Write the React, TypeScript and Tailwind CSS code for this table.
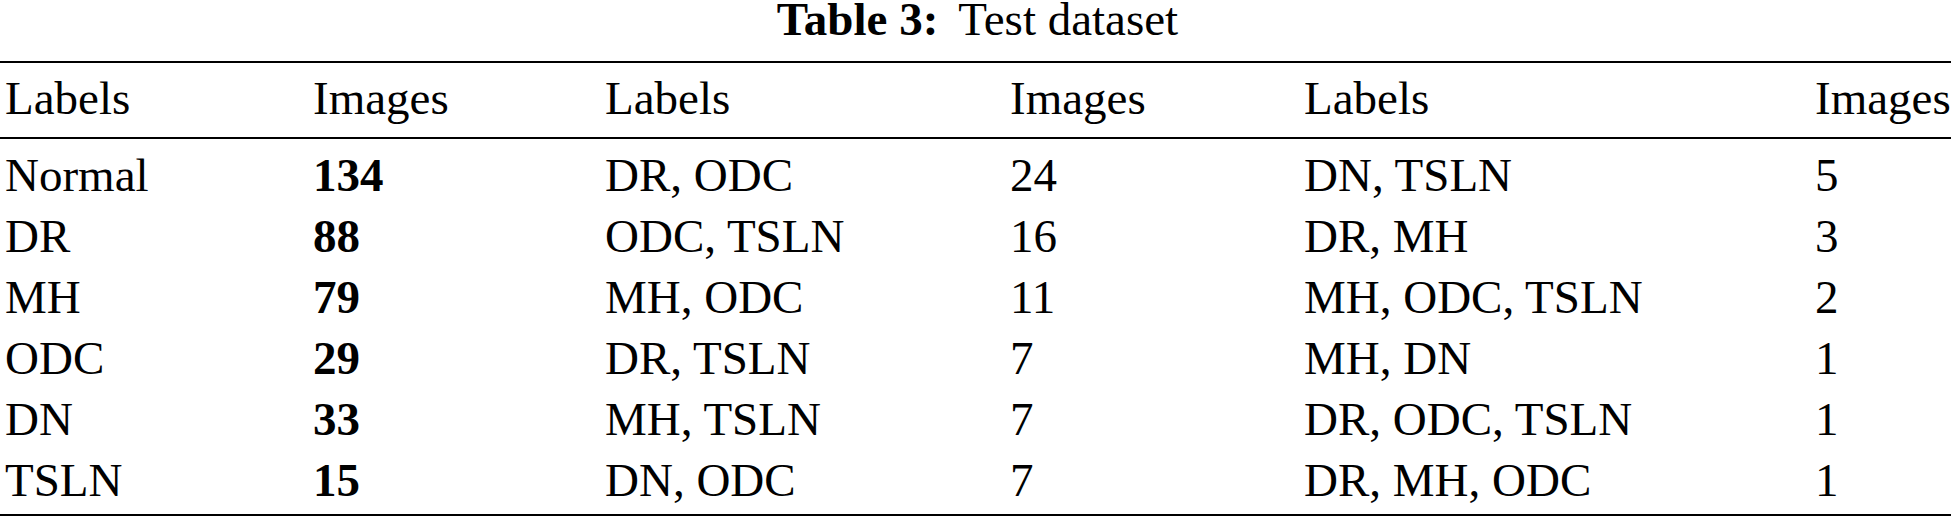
import React from "react";

const rows: [string, string, string, string, string, string][] = [
  ["Normal", "134", "DR, ODC", "24", "DN, TSLN", "5"],
  ["DR", "88", "ODC, TSLN", "16", "DR, MH", "3"],
  ["MH", "79", "MH, ODC", "11", "MH, ODC, TSLN", "2"],
  ["ODC", "29", "DR, TSLN", "7", "MH, DN", "1"],
  ["DN", "33", "MH, TSLN", "7", "DR, ODC, TSLN", "1"],
  ["TSLN", "15", "DN, ODC", "7", "DR, MH, ODC", "1"],
];

const grid = "grid grid-cols-[308px_292px_405px_294px_511px_1fr] pl-[5px]";

export default function App() {
  return (
    <div className="w-[1955px] h-[521px] bg-white text-black font-['Liberation_Serif',_'Times_New_Roman',_serif] text-[47px]">
      <div className="h-[38px] leading-[38px] text-center whitespace-nowrap">
        <span className="font-bold">Table 3:</span>
        <span className="ml-[20px]">Test dataset</span>
      </div>
      <div className="mt-[23px] w-[1951px] border-t-2 border-b-2 border-black">
        <div className={`${grid} pt-[5px] pb-[8px] border-b-2 border-black leading-[61px]`}>
          <div>Labels</div>
          <div>Images</div>
          <div>Labels</div>
          <div>Images</div>
          <div>Labels</div>
          <div>Images</div>
        </div>
        <div className="pt-[6px] pb-[3px] leading-[61px]">
          {rows.map((r, i) => (
            <div key={i} className={`${grid} whitespace-nowrap`}>
              <div>{r[0]}</div>
              <div className="font-bold">{r[1]}</div>
              <div>{r[2]}</div>
              <div>{r[3]}</div>
              <div>{r[4]}</div>
              <div>{r[5]}</div>
            </div>
          ))}
        </div>
      </div>
    </div>
  );
}
